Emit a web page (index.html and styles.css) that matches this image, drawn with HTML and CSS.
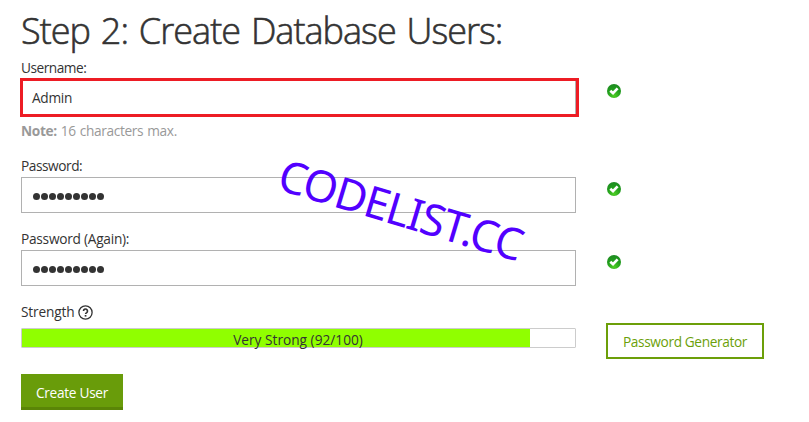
FILE: index.html
```html
<!DOCTYPE html>
<html lang="en">
<head>
<meta charset="utf-8">
<title>Create Database Users</title>
<link rel="stylesheet" href="styles.css">
</head>
<body>
<svg class="defs" aria-hidden="true">
  <defs>
    <radialGradient id="green" cx=".5" cy=".85" r=".85">
      <stop offset="0" stop-color="#4fd024"/>
      <stop offset=".55" stop-color="#219e1c"/>
      <stop offset="1" stop-color="#1d8a22"/>
    </radialGradient>
    <symbol id="ok" viewBox="0 0 14 14">
      <circle cx="7" cy="7" r="7" fill="url(#green)"/>
      <path d="M3.3 6.8 6 9.2l4.6-4.8" fill="none" stroke="#fff" stroke-width="2.7"/>
    </symbol>
  </defs>
</svg>
<main class="page">
  <h1><span class="title">Step 2: Create Database Users:</span></h1>
  <form class="form">
    <div class="row username">
      <label><span class="t-user">Username:</span></label>
      <div class="field highlighted"><span class="t-admin">Admin</span></div>
      <svg class="ok"><use href="#ok"/></svg>
      <p class="note"><span class="t-note"><b>Note:</b> 16 characters max.</span></p>
    </div>
    <div class="row password">
      <label><span class="t-pass">Password:</span></label>
      <div class="field dots"><i></i><i></i><i></i><i></i><i></i><i></i><i></i><i></i><i></i></div>
      <svg class="ok"><use href="#ok"/></svg>
    </div>
    <div class="row password">
      <label><span class="t-again">Password (Again):</span></label>
      <div class="field dots"><i></i><i></i><i></i><i></i><i></i><i></i><i></i><i></i><i></i></div>
      <svg class="ok"><use href="#ok"/></svg>
    </div>
    <div class="row strength">
      <label><span class="t-strength">Strength</span>
        <svg class="help" viewBox="0 0 15 15"><circle cx="7.5" cy="7.5" r="6.6" fill="none" stroke="#333" stroke-width="1.3"/><path d="M5.5 6a2 2 0 1 1 3.2 1.6c-.8.5-1.1.8-1.1 1.5" fill="none" stroke="#333" stroke-width="1.6"/><path d="M6.7 10h1.7v1.6H6.7z" fill="#333"/></svg>
      </label>
      <div class="meter"><div class="fill" style="width:92%"></div><span class="t-meter">Very Strong (92/100)</span></div>
      <button type="button" class="generator"><span class="t-gen">Password Generator</span></button>
    </div>
    <button type="button" class="create"><span class="t-create">Create User</span></button>
  </form>
  <div class="watermark">CODELIST.CC</div>
</main>
</body>
</html>
```
FILE: styles.css
```css
* { box-sizing: border-box; }
body {
  margin: 0;
  background: #fff;
  color: #333;
  font: 13.7px/20px "Open Sans", "Noto Sans", sans-serif;
}
.defs { position: absolute; width: 0; height: 0; }
.page { position: relative; width: 809px; height: 422px; padding: 6px 21px 0; overflow: hidden; }
h1 { margin: 0; height: 52px; font-size: 36px; line-height: 49px; font-weight: 300; white-space: nowrap; }
.title { letter-spacing: -.98px; word-spacing: 2.5px; -webkit-text-stroke: .6px #333; }
.row { display: grid; grid-template-columns: 555px 158px; column-gap: 30px; align-items: start; white-space: nowrap; }
.username { height: 98px; grid-template-rows: 21px 36px 41px; }
.password { height: 73px; grid-template-rows: 21px 52px; }
.strength { height: 74px; grid-template-rows: 26px 48px; }
label { grid-column: 1 / -1; display: flex; }
.t-user { letter-spacing: -.5px; }
.t-pass { letter-spacing: -.45px; }
.t-again { letter-spacing: -.25px; }
.t-strength { letter-spacing: -.15px; }
.t-note { letter-spacing: -.35px; word-spacing: .8px; }
.t-gen { letter-spacing: -.38px; }
.t-create { letter-spacing: -.3px; }
.t-admin { letter-spacing: -.3px; }
.field { display: flex; align-items: center; height: 36px; padding: 2px 10px 0; border: 1px solid #b1b1b1; }
.highlighted { position: relative; }
.highlighted::after { content: ""; position: absolute; inset: -2px -4px -3px -2px; border: 3px solid #ed1c24; }
.ok { width: 14px; height: 14px; margin: 5px 0 0 1px; }
.note { margin: 0; padding-top: 6px; grid-column: 1; color: #999; }
.dots { gap: 1px; padding-top: 3px; padding-left: 11px; }
.dots i { width: 7px; height: 7px; border-radius: 50%; background: #333; }
.help { width: 15px; height: 15px; margin: 3px 0 0 3px; }
.meter { position: relative; height: 20px; padding-right: 1px; border: 1px solid #ccc; border-radius: 1px; text-align: center; line-height: 22px; }
.fill { position: absolute; inset: 0 auto 0 0; max-width: 508px; background: #90ff00; }
.meter span { position: relative; }
button { font: inherit; padding: 0; white-space: nowrap; }
.generator { width: 158px; height: 36px; margin-top: -5px; padding-top: 2px; border: 2px solid #6c9f09; background: #fff; color: #6c9f09; }
.create { display: block; width: 102px; height: 36px; margin-top: -2px; padding-top: 4px; border: 0; border-bottom: 3px solid #5a8507; background: #699c0a; color: #fff; }
.watermark { position: absolute; left: 275px; top: 179px; height: 60px; font: 400 44px/60px "Noto Sans", sans-serif; color: #5200ff; white-space: nowrap; transform: rotate(16.7deg); letter-spacing: -1.3px; }
```
